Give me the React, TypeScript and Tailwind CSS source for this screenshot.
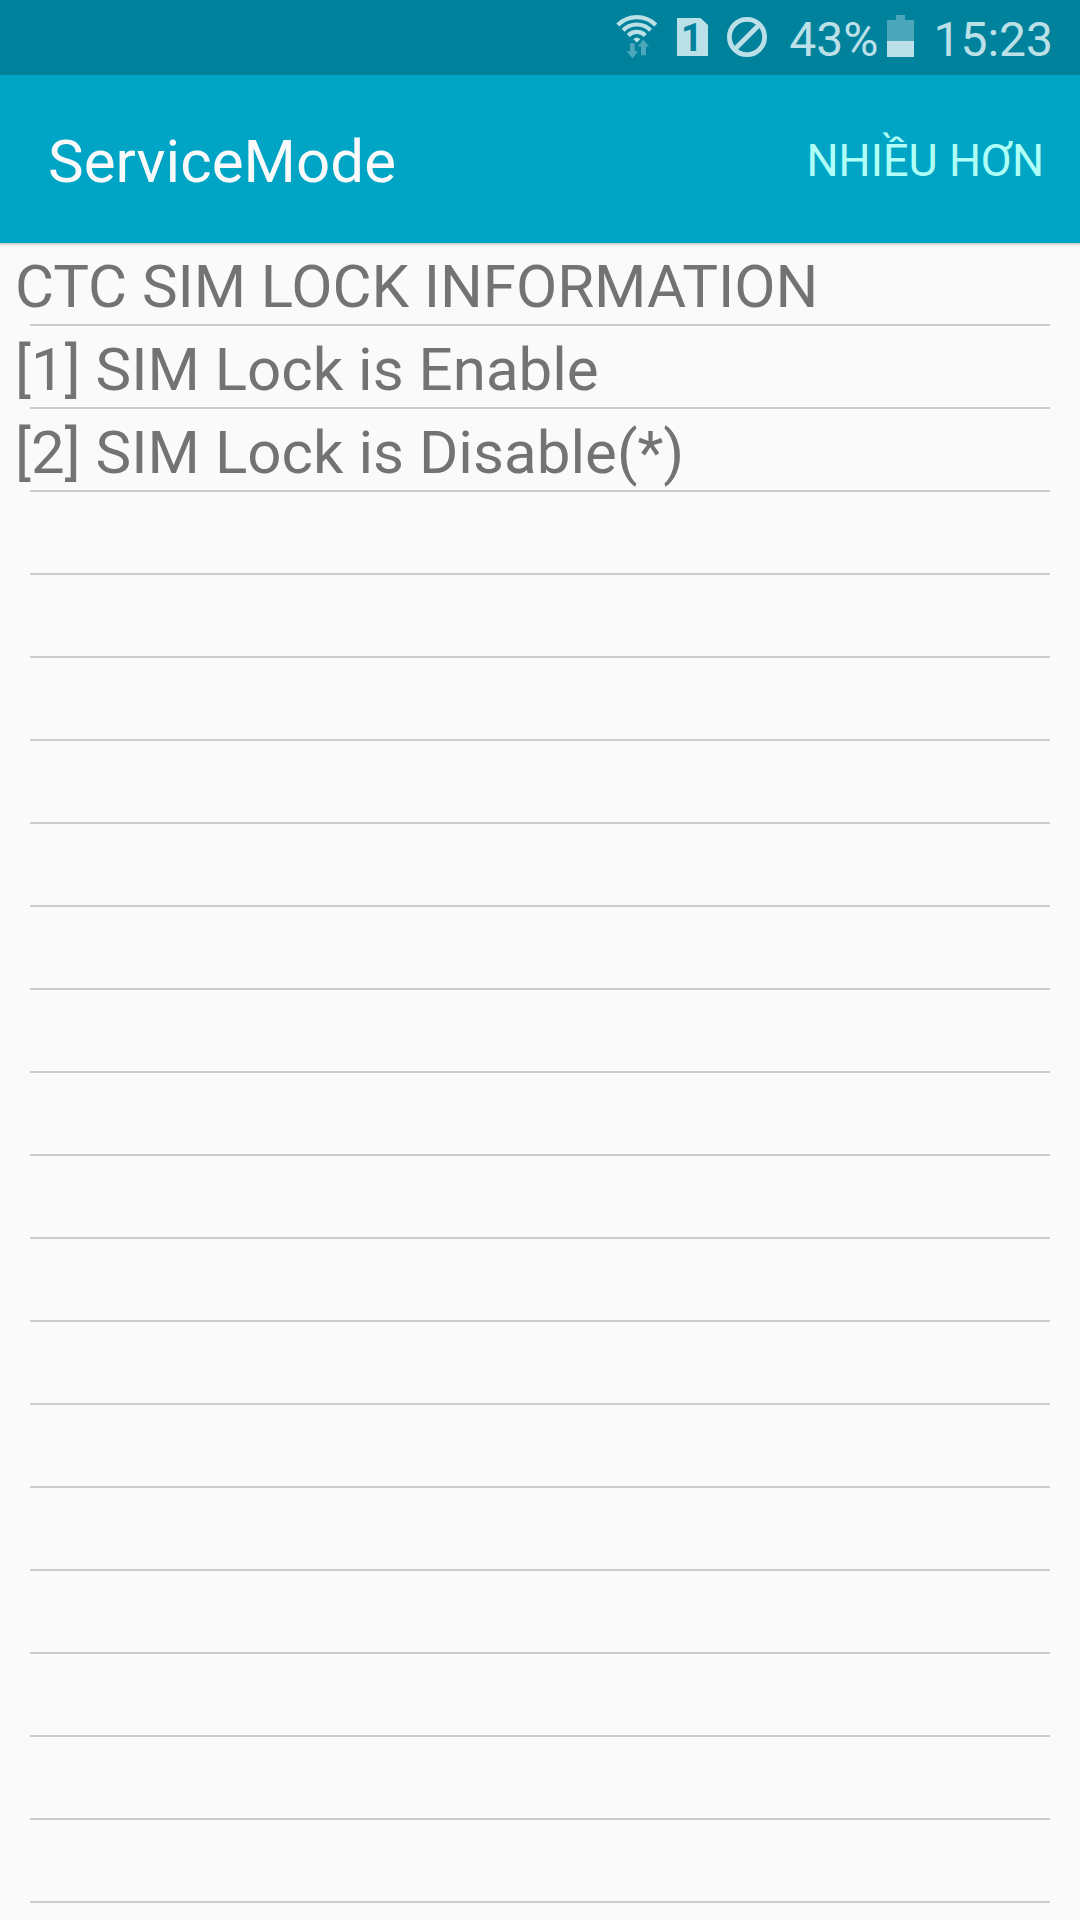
const entries = [
  { text: "CTC SIM LOCK INFORMATION", className: "tracking-[-0.06px]" },
  { text: "[1] SIM Lock is Enable", className: "tracking-[0.02px]" },
  { text: "[2] SIM Lock is Disable(*)", className: "tracking-[0.04px]" },
]

const ROW_COUNT = 20

const rows = Array.from({ length: ROW_COUNT }, (_, i) => entries[i])

const WifiIcon = () => (
  <svg width="42" height="46" viewBox="0 0 42 46" className="shrink-0">
    <g fill="none" stroke="#bce0e7" strokeWidth="4.2">
      <path d="M1.8 10A26.8 26.8 0 0 1 39.8 10" />
      <path d="M7.1 15.2A19.3 19.3 0 0 1 34.5 15.2" />
      <path d="M12.3 20.4A12 12 0 0 1 29.3 20.4" />
    </g>
    <path d="M17.3 24.2Q20.8 20.6 24.3 24.2L20.8 27.6Z" fill="#bce0e7" />
    <path
      d="M14 28.2H18.8V36.2H22.2L16.5 43.5L10.6 36.2H14Z M25 40.2V31.4H21.4L27.3 24.8L33.2 31.4H30V40.2Z"
      fill="#4ca7ba"
    />
  </svg>
)

const SimIcon = () => (
  <svg width="31" height="38" viewBox="0 0 31 38" className="shrink-0 overflow-visible">
    <path d="M0 0H23.5L31 7V38H0Z" fill="#bce0e7" />
    <text
      x="15"
      y="33"
      textAnchor="middle"
      className="fill-[#00829d] font-['Roboto',sans-serif] text-[38px] font-bold"
    >
      1
    </text>
  </svg>
)

const BlockedIcon = () => (
  <svg width="40" height="40" viewBox="0 0 40 40" className="shrink-0">
    <g fill="none" stroke="#bce0e7" strokeWidth="4.8">
      <circle cx="20" cy="20" r="17.6" />
      <path d="M7.8 32.2L32.2 7.8" />
    </g>
  </svg>
)

const BatteryIcon = () => (
  <svg width="27" height="42" viewBox="0 0 27 42" className="shrink-0">
    <path d="M9 0H18V5H27V26H0V5H9Z" fill="#4ca7ba" />
    <path d="M0 26H27V42H0Z" fill="#bce0e7" />
  </svg>
)

const StatusBar = () => (
  <div className="flex h-[75px] items-start justify-end bg-[#00829d] pr-[27px] text-[48px] leading-[79px] text-[#bce0e7]">
    <div className="pt-[15px]">
      <WifiIcon />
    </div>
    <div className="ml-[19px] pt-[18px]">
      <SimIcon />
    </div>
    <div className="ml-[19px] pt-[17px]">
      <BlockedIcon />
    </div>
    <span className="ml-[22px]">43%</span>
    <div className="ml-[9px] pt-[15px]">
      <BatteryIcon />
    </div>
    <span className="ml-[19px]">15:23</span>
  </div>
)

const ActionBar = () => (
  <header className="flex h-[168px] items-start justify-between bg-[#00a5c6] pr-[36px] pl-[48px]">
    <h1 className="text-[60px] leading-[173px] tracking-[0.06px] text-[#fafafa]">ServiceMode</h1>
    <button className="text-[45px] leading-[171px] text-[#b0fff6]">NHIỀU HƠN</button>
  </header>
)

export default function App() {
  return (
    <div className="h-[1920px] w-[1080px] overflow-hidden bg-[#fafafa] font-['Roboto',sans-serif]">
      <StatusBar />
      <ActionBar />
      {/* the short gradient is the shadow under the action bar */}
      <ul className="bg-[linear-gradient(#c4c4c4,#fafafa_3px)]">
        {rows.map((row, i) => (
          <li key={i}>
            <p className="h-[81px] pl-[15px] text-[60px] leading-[87px] whitespace-pre text-[#737373]">
              {row && <span className={row.className}>{row.text}</span>}
            </p>
            <div className="mx-[30px] h-[2px] bg-[#cccccc]" />
          </li>
        ))}
      </ul>
    </div>
  )
}
